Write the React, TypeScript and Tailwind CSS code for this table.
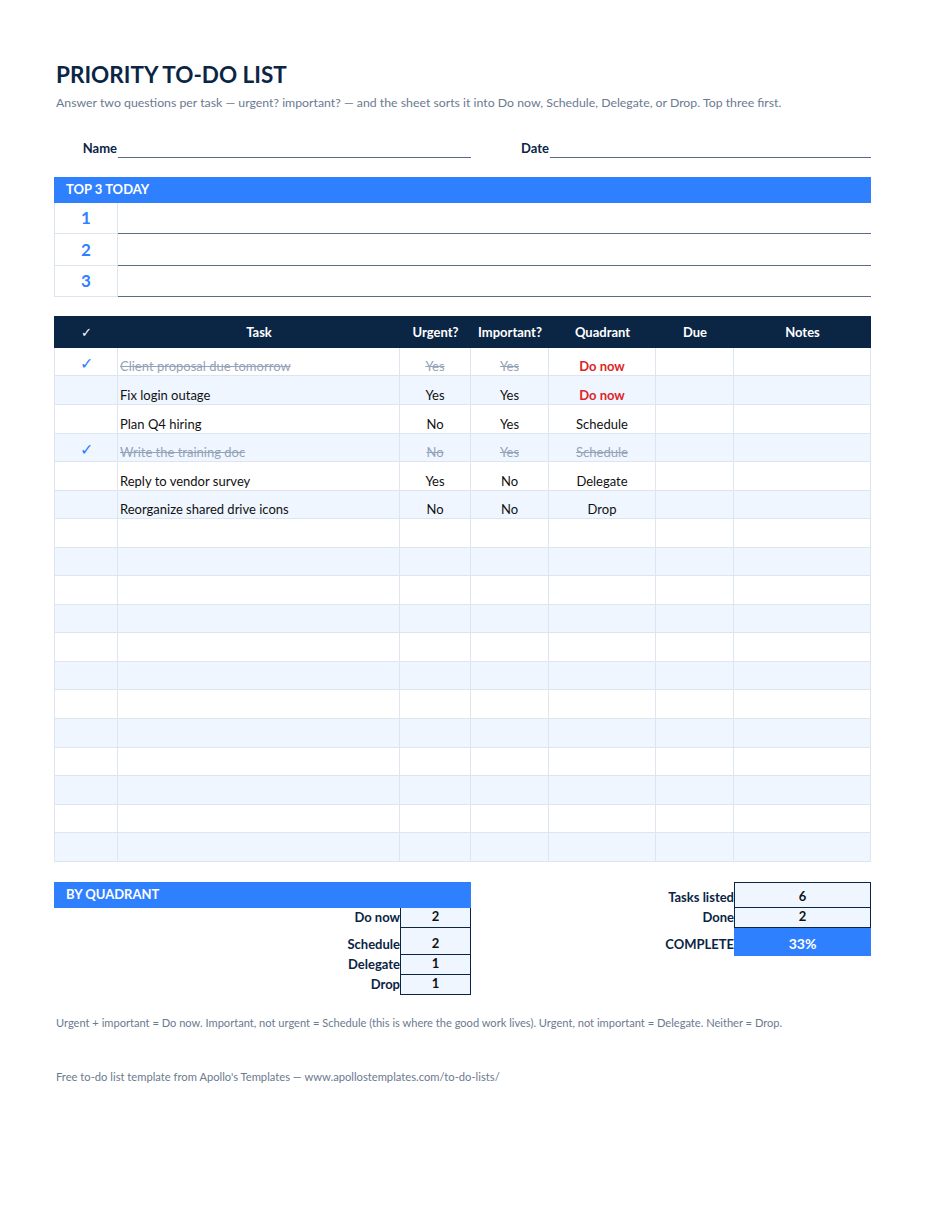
import React from 'react';

type Task = {
  done: boolean;
  task: string;
  urgent: string;
  important: string;
  quadrant: string;
};

const tasks: Task[] = [
  { done: true, task: 'Client proposal due tomorrow', urgent: 'Yes', important: 'Yes', quadrant: 'Do now' },
  { done: false, task: 'Fix login outage', urgent: 'Yes', important: 'Yes', quadrant: 'Do now' },
  { done: false, task: 'Plan Q4 hiring', urgent: 'No', important: 'Yes', quadrant: 'Schedule' },
  { done: true, task: 'Write the training doc', urgent: 'No', important: 'Yes', quadrant: 'Schedule' },
  { done: false, task: 'Reply to vendor survey', urgent: 'Yes', important: 'No', quadrant: 'Delegate' },
  { done: false, task: 'Reorganize shared drive icons', urgent: 'No', important: 'No', quadrant: 'Drop' },
];

const cols = 'grid grid-cols-[64px_282px_71px_78px_107px_78px_137px]';
const cell = 'border-r border-b border-[#dde5ee] flex items-end justify-center pb-[1px] text-[13px] leading-[16px]';
const plain = 'text-[#111]';
const struck = 'line-through decoration-[#94a3b8] text-[#94a3b8]';

function TaskRow({ t, i }: { t?: Task; i: number }) {
  const bg = i % 2 === 0 ? 'bg-white' : 'bg-[#eff6ff]';
  const tone = t?.done ? struck : plain;
  const quadTone = t?.quadrant === 'Do now' ? 'font-bold text-[#dc2626]' : tone;
  return (
    <div className={`${cols} ${bg} h-[28.56px]`}>
      <div className={`${cell} border-l text-[#2f80ff] !text-[16px] !pb-[4px]`}>{t?.done ? '✓' : ''}</div>
      <div className={`${cell} !justify-start pl-[2px] ${tone}`}>{t?.task}</div>
      <div className={`${cell} ${tone}`}>{t?.urgent}</div>
      <div className={`${cell} ${tone}`}>{t?.important}</div>
      <div className={`${cell} ${quadTone}`}>{t?.quadrant}</div>
      <div className={cell}></div>
      <div className={cell}></div>
    </div>
  );
}

export default function App() {
  const rows = Array.from({ length: 18 }, (_, i) => tasks[i]);
  const quad = [
    { label: 'Do now', n: 2, h: 'h-[20px]' },
    { label: 'Schedule', n: 2, h: 'h-[27px]' },
    { label: 'Delegate', n: 1, h: 'h-[20px]' },
    { label: 'Drop', n: 1, h: 'h-[20px]' },
  ];

  return (
    <div className="w-[935px] h-[1210px] bg-white font-['Lato',sans-serif] text-[#0b2545]">
      <div className="ml-[54px] pt-[60px] w-[817px]">
        <h1 className="pl-[2px] text-[22.5px] font-bold leading-[30px] text-[#0b2545]">PRIORITY TO-DO LIST</h1>
        <p className="pl-[2px] mt-[5px] text-[12.3px] leading-[15px] text-[#6b7a90]">
          Answer two questions per task — urgent? important? — and the sheet sorts it into Do now, Schedule, Delegate, or Drop. Top three first.
        </p>

        <div className="mt-[27px] flex items-end text-[13px] font-bold h-[21px]">
          <div className="w-[64px] text-right pr-[1px]">Name</div>
          <div className="w-[353px] border-b border-[#5b6b86] h-full"></div>
          <div className="w-[48px]"></div>
          <div className="w-[31px] text-right pr-[1px]">Date</div>
          <div className="w-[321px] border-b border-[#5b6b86] h-full"></div>
        </div>

        <div className="mt-[19px] h-[26px] bg-[#2f80ff] text-white font-bold text-[13px] flex items-center pl-[12px]">
          TOP 3 TODAY
        </div>
        {[1, 2, 3].map((n) => (
          <div key={n} className="flex h-[31.3px]">
            <div className="w-[64px] border-l border-r border-b border-[#dde5ee] flex items-center justify-center text-[#2f80ff] font-bold text-[17px]">
              {n}
            </div>
            <div className="flex-1 border-b border-[#5b6b86]"></div>
          </div>
        ))}

        <div className={`${cols} mt-[19px] h-[32px] bg-[#0b2545] text-white font-bold text-[13px]`}>
          {['✓', 'Task', 'Urgent?', 'Important?', 'Quadrant', 'Due', 'Notes'].map((h) => (
            <div key={h} className={`flex items-center justify-center pt-[1px] ${h === '✓' ? 'font-normal' : ''}`}>
              {h}
            </div>
          ))}
        </div>
        {rows.map((t, i) => (
          <TaskRow key={i} t={t} i={i} />
        ))}

        <div className="mt-[20px] flex">
          <div className="w-[417px]">
            <div className="h-[26px] bg-[#2f80ff] text-white font-bold text-[13px] flex items-center pl-[12px]">
              BY QUADRANT
            </div>
            {quad.map((q) => (
              <div key={q.label} className={`flex ${q.h}`}>
                <div className="w-[346px] flex items-end justify-end text-[13px] font-bold">{q.label}</div>
                <div className="w-[71px] border-l border-r border-b border-[#0b2545] bg-[#eff6ff] flex items-end justify-center text-[13px] font-bold text-[#111]">
                  {q.n}
                </div>
              </div>
            ))}
          </div>
          <div className="flex-1 flex flex-col items-end">
            <div className="flex h-[26px]">
              <div className="w-[134px] flex items-end justify-end text-[13px] font-bold">Tasks listed</div>
              <div className="w-[137px] border border-[#0b2545] bg-[#eff6ff] flex items-end justify-center text-[13px] font-bold text-[#111]">
                6
              </div>
            </div>
            <div className="flex h-[20px]">
              <div className="w-[134px] flex items-end justify-end text-[13px] font-bold">Done</div>
              <div className="w-[137px] border-l border-r border-b border-[#0b2545] bg-[#eff6ff] flex items-end justify-center text-[13px] font-bold text-[#111]">
                2
              </div>
            </div>
            <div className="flex h-[28px]">
              <div className="w-[134px] flex items-end justify-end pb-[1px] text-[13px] font-bold">COMPLETE</div>
              <div className="w-[137px] bg-[#2f80ff] flex items-end justify-center pb-[2px] text-[14px] font-bold text-white">
                33%
              </div>
            </div>
          </div>
        </div>

        <p className="pl-[2px] mt-[21px] text-[11.1px] leading-[14px] text-[#6b7a90]">
          Urgent + important = Do now. Important, not urgent = Schedule (this is where the good work lives). Urgent, not important = Delegate. Neither = Drop.
        </p>
        <p className="pl-[2px] mt-[40px] text-[11.2px] leading-[14px] text-[#6b7a90]">
          Free to-do list template from Apollo's Templates — www.apollostemplates.com/to-do-lists/
        </p>
      </div>
    </div>
  );
}
